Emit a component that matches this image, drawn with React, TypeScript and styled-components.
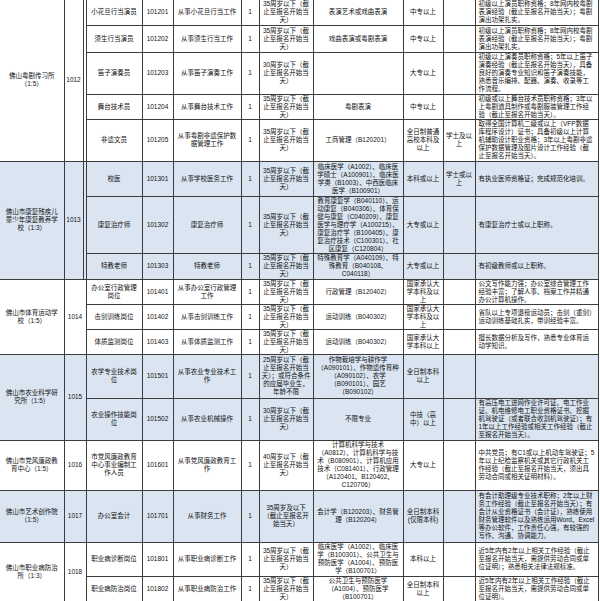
import React from 'react';
import styled, { createGlobalStyle } from 'styled-components';

const GlobalStyle = createGlobalStyle`
  html, body { margin: 0; padding: 0; background: #ffffff; }
  body {
    width: 600px;
    height: 601px;
    overflow: hidden;
    font-family: "Liberation Sans", "Noto Sans CJK SC", sans-serif;
  }
`;

type Tone = 'white' | 'blue';

const Page = styled.div`
  width: 600px;
  height: 601px;
  display: flex;
  flex-direction: column;
  overflow: hidden;
`;

const Sheet = styled.table`
  width: 598px;
  table-layout: fixed;
  border-collapse: collapse;
  border-top-style: hidden;
  border-left-style: hidden;
  font-size: 6.5px;
  line-height: 8px;
  color: #111111;
  flex: none;
`;

const Col = styled.col<{ $w: number }>`
  width: ${(p) => p.$w}px;
`;

const Row = styled.tr<{ $h: number }>`
  height: ${(p) => p.$h}px;
`;

const Cell = styled.td<{ $tone: Tone; $align?: 'left' | 'center'; $pad?: number }>`
  border: 1px solid #3c3c3c;
  background: ${(p) => (p.$tone === 'blue' ? '#dae5f1' : '#ffffff')};
  text-align: ${(p) => p.$align ?? 'center'};
  vertical-align: middle;
  padding: 0 ${(p) => p.$pad ?? 2}px;
  overflow: hidden;
`;

const Band = styled.div`
  flex: 1;
  background: #bdbdbd;
`;

const AGE = '35周岁以下（截止至报名开始当天）';

type Post = {
  name: string;
  code: string;
  duty: string;
  age: string;
  major: string;
  edu: string;
  degree: string;
  req: string;
  h: number;
};

type Group = {
  unit: string;
  code: string;
  tone: Tone;
  split: boolean;
  posts: Post[];
};

const OPERA = '初级以上演员职称资格；8年网内校粤剧表演经验（截止至报名开始当天）；粤剧演出功架扎实。';

const groups: Group[] = [
  {
    unit: '佛山粤剧传习所（1:5）',
    code: '1012',
    tone: 'white',
    split: true,
    posts: [
      { name: '小花旦行当演员', code: '101201', duty: '从事小花旦行当工作', age: AGE, major: '表演艺术或戏曲表演', edu: '中专以上', degree: '', req: OPERA, h: 25 },
      { name: '须生行当演员', code: '101202', duty: '从事须生行当工作', age: AGE, major: '戏曲表演或粤剧表演', edu: '中专以上', degree: '', req: OPERA, h: 27 },
      { name: '笛子演奏员', code: '101203', duty: '从事笛子演奏工作', age: '30周岁以下（截止至报名开始当天）', major: '', edu: '大专以上', degree: '', req: '初级以上演奏员职称资格；5年以上笛子演奏经验（截止至报名开始当天），具备良好的演奏专业知识和笛子演奏技能，熟悉音乐编排、配器、演奏、收录等工作流程。', h: 42 },
      { name: '舞台技术员', code: '101204', duty: '从事舞台技术工作', age: AGE, major: '粤剧表演', edu: '中专以上', degree: '', req: '初级或以上舞台技术员职称资格；3年以上粤剧道具制作或粤剧服装管理工作经验（截止至报名开始当天）。', h: 24 },
      { name: '非遗文员', code: '101205', duty: '从事粤剧非遗保护数据管理工作', age: AGE, major: '工商管理（B120201）', edu: '全日制普通高校本科及以上', degree: '学士及以上', req: '取得全国计算机二级或以上（VFP数据库程序设计）证书；具备初级以上计算机辅助设计职业资格；3年以上粤剧非遗保护数据管理及图片设计工作经验（截止至报名开始当天）。', h: 42 },
    ],
  },
  {
    unit: '佛山市康复残疾儿童少年康复教养学校（1:3）',
    code: '1013',
    tone: 'blue',
    split: true,
    posts: [
      { name: '校医', code: '101301', duty: '从事学校医务工作', age: AGE, major: '临床医学（A1002）、临床医学硕士（A100901）、临床医学类（B1003）、中西医临床医学（B100901）', edu: '本科或以上', degree: '学士或以上', req: '有执业医师资格证；完成规范化培训。', h: 35 },
      { name: '康复治疗师', code: '101302', duty: '康复治疗师', age: AGE, major: '教育康复学（B040110）、运动康复（B040306）、体育保健与康复（C040209）、康复医学与理疗学（A100215）、康复治疗学（B100405）、康复治疗技术（C100301）、社区康复（C120804）', edu: '大专或以上', degree: '', req: '有康复治疗士或以上职称。', h: 57 },
      { name: '特教老师', code: '101303', duty: '特教老师', age: AGE, major: '特殊教育学（A040109）、特殊教育（B040108、C040118）', edu: '大专或以上', degree: '', req: '有初级教师或以上职称。', h: 26 },
    ],
  },
  {
    unit: '佛山市体育运动学校（1:5）',
    code: '1014',
    tone: 'white',
    split: false,
    posts: [
      { name: '办公室行政管理岗位', code: '101401', duty: '从事办公室行政管理工作', age: AGE, major: '行政管理（B120402）', edu: '国家承认大学本科及以上', degree: '', req: '公文写作能力强；办公室综合管理工作经验丰富；了解人事、档案工作并精通办公计算机操作。', h: 25 },
      { name: '击剑训练岗位', code: '101402', duty: '从事击剑训练工作', age: AGE, major: '运动训练（B040302）', edu: '国家承认大学本科及以上', degree: '', req: '省队以上专项退役运动员；击剑（重剑）运动训练基础扎实，带训经验丰富。', h: 25 },
      { name: '体质监测岗位', code: '101403', duty: '从事体质监测工作', age: AGE, major: '运动训练（B040302）', edu: '国家承认大学本科以上', degree: '', req: '擅长数据分析及写作，熟悉专业体育运动学知识。', h: 25 },
    ],
  },
  {
    unit: '佛山市农业科学研究所（1:5）',
    code: '1015',
    tone: 'blue',
    split: false,
    posts: [
      { name: '农学专业技术岗位', code: '101501', duty: '从事农业专业技术工作', age: '25周岁以下（截止至报名开始当天）；或符合条件的应届毕业生，年龄不限', major: '作物栽培学与耕作学（A090101）、作物遗传育种（A090102）、农学（B090101）、园艺（B090102）', edu: '全日制本科以上', degree: '', req: '', h: 44 },
      { name: '农业操作技能岗位', code: '101502', duty: '从事农业机械操作', age: '30周岁以下（截止至报名开始当天）', major: '不限专业', edu: '中技（高中）以上', degree: '', req: '有高压电工进网作业许可证、电工作业证、机电维修电工职业资格证书、挖掘机驾驶证（或者联合收割机驾驶证）；有1年以上工作经验或相关工作经验（截止至报名开始当天）。', h: 42 },
    ],
  },
  {
    unit: '佛山市党风廉政教育中心（1:5）',
    code: '1016',
    tone: 'white',
    split: false,
    posts: [
      { name: '市党风廉政教育中心事业编制工作人员', code: '101601', duty: '从事党风廉政教育工作', age: '40周岁以下（截止至报名开始当天）', major: '计算机科学与技术（A0812）、计算机科学与技术（B080901）、计算机应用技术（C081401）、行政管理（A120401、B120402、C120706）', edu: '大专以上', degree: '', req: '中共党员；有C1或以上机动车驾驶证；5年以上纪检监察机关或其它行政机关工作经验（截止至报名开始当天，须出具劳动合同或相关证明材料）。', h: 50 },
    ],
  },
  {
    unit: '佛山市艺术创作院（1:5）',
    code: '1017',
    tone: 'blue',
    split: false,
    posts: [
      { name: '办公室会计', code: '101701', duty: '从事财务工作', age: '35周岁及以下（截止至报名开始当天）', major: '会计学（B120203）、财务管理（B120204）', edu: '全日制本科(仅限本科)', degree: '', req: '有会计助理级专业技术职称；2年以上财务工作经验（截止至报名开始当天）；有会计从业资格证书（会计证），熟练使用财务管理软件以及熟练运用Word、Excel等办公软件，工作责任心强，有较强的写作、沟通、协调能力。', h: 52 },
    ],
  },
  {
    unit: '佛山市职业病防治所（1:3）',
    code: '1018',
    tone: 'white',
    split: false,
    posts: [
      { name: '职业病诊断岗位', code: '101801', duty: '从事职业病诊断工作', age: AGE, major: '临床医学（A1002）、临床医学（B100301）、公共卫生与预防医学（A1004）、预防医学（B100701）', edu: '本科以上', degree: '', req: '近5年内有2年以上相关工作经验（截止至报名开始当天，需提供劳动合同或单位证明）；熟悉相关法律法规标准。', h: 34 },
      { name: '职业病防治岗位', code: '101802', duty: '从事职业病防治工作', age: AGE, major: '公共卫生与预防医学（A1004）、预防医学（B100701）', edu: '全日制本科以上', degree: '', req: '近5年内有2年以上相关工作经验（截止至报名开始当天，需提供劳动合同或单位证明）。', h: 23 },
    ],
  },
];

const widths = [64, 19, 3, 56, 31, 68, 18, 54, 90, 40, 32, 123];

export default function App() {
  return (
    <Page>
      <GlobalStyle />
      <Sheet>
        <colgroup>
          {widths.map((w, i) => (
            <Col key={i} $w={w} />
          ))}
        </colgroup>
        <tbody>
          {groups.map((g) =>
            g.posts.map((p, i) => (
              <Row key={p.code} $h={p.h}>
                {i === 0 && (
                  <>
                    <Cell $tone={g.tone} rowSpan={g.posts.length} $pad={4}>
                      {g.unit}
                    </Cell>
                    {g.split ? (
                      <>
                        <Cell $tone={g.tone} rowSpan={g.posts.length} $pad={0}>
                          {g.code}
                        </Cell>
                        <Cell $tone={g.tone} rowSpan={g.posts.length} $pad={0} />
                      </>
                    ) : (
                      <Cell $tone={g.tone} rowSpan={g.posts.length} colSpan={2} $pad={0}>
                        {g.code}
                      </Cell>
                    )}
                  </>
                )}
                <Cell $tone={g.tone} $pad={3}>{p.name}</Cell>
                <Cell $tone={g.tone} $pad={1}>{p.code}</Cell>
                <Cell $tone={g.tone} $pad={2}>{p.duty}</Cell>
                <Cell $tone={g.tone} $pad={0}>1</Cell>
                <Cell $tone={g.tone} $pad={2}>{p.age}</Cell>
                <Cell $tone={g.tone} $pad={2}>{p.major}</Cell>
                <Cell $tone={g.tone} $pad={2}>{p.edu}</Cell>
                <Cell $tone={g.tone} $pad={2}>{p.degree}</Cell>
                <Cell $tone={g.tone} $pad={3} $align="left">{p.req}</Cell>
              </Row>
            ))
          )}
        </tbody>
      </Sheet>
      <Band />
    </Page>
  );
}
